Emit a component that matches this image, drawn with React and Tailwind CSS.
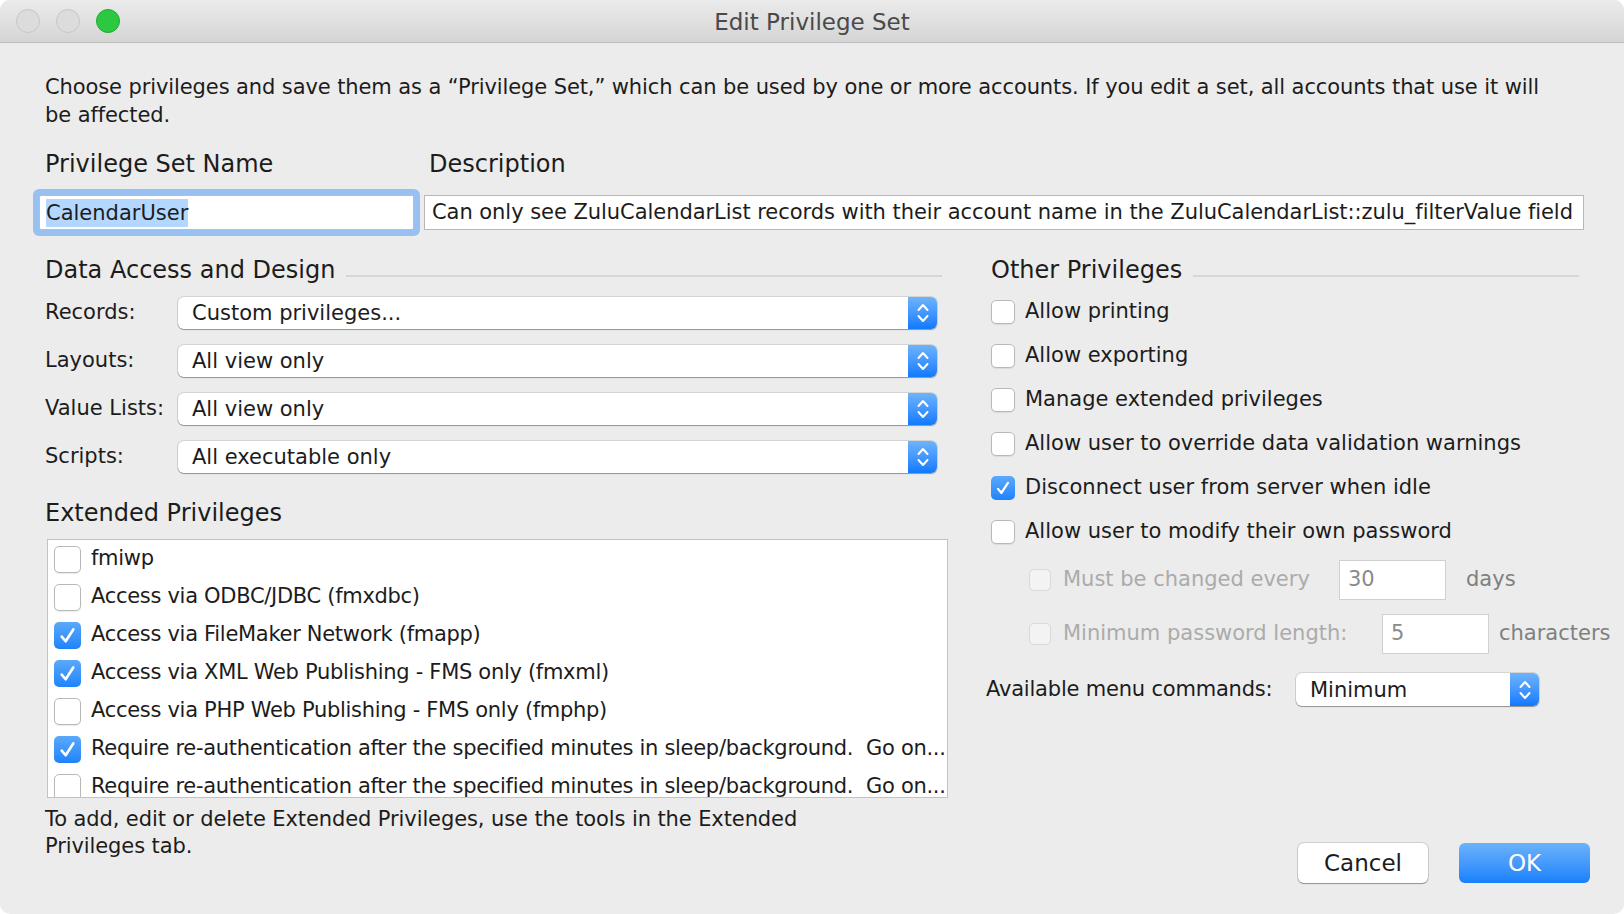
import React from 'react'

const FONT = { fontFamily: "'DejaVu Sans', 'Liberation Sans', sans-serif" }

const EXTENDED = [
  { label: 'fmiwp', on: false },
  { label: 'Access via ODBC/JDBC (fmxdbc)', on: false },
  { label: 'Access via FileMaker Network (fmapp)', on: true },
  { label: 'Access via XML Web Publishing - FMS only (fmxml)', on: true },
  { label: 'Access via PHP Web Publishing - FMS only (fmphp)', on: false },
  { label: 'Require re-authentication after the specified minutes in sleep/background.  Go on...', on: true },
  { label: 'Require re-authentication after the specified minutes in sleep/background.  Go on...', on: false },
]

const OTHER = [
  { label: 'Allow printing', on: false },
  { label: 'Allow exporting', on: false },
  { label: 'Manage extended privileges', on: false },
  { label: 'Allow user to override data validation warnings', on: false },
  { label: 'Disconnect user from server when idle', on: true },
  { label: 'Allow user to modify their own password', on: false },
]

const POPUPS = [
  { label: 'Records:', value: 'Custom privileges...' },
  { label: 'Layouts:', value: 'All view only' },
  { label: 'Value Lists:', value: 'All view only' },
  { label: 'Scripts:', value: 'All executable only' },
]

function Check({ on, size = 24, disabled = false }) {
  if (on) {
    return (
      <div
        className="shrink-0 rounded-[5px] bg-gradient-to-b from-[#5aa9fb] to-[#1d83fb] flex items-center justify-center"
        style={{ width: size, height: size }}
      >
        <svg width={size - 6} height={size - 6} viewBox="0 0 16 16" fill="none">
          <path d="M3.6 8.8 L6.6 12.4 L12.4 3.4" stroke="white" strokeWidth="2" strokeLinecap="round" strokeLinejoin="round" />
        </svg>
      </div>
    )
  }
  return (
    <div
      className={
        disabled
          ? 'shrink-0 rounded-[5px] bg-[#f3f3f3] border border-[#d9d9d9]'
          : 'shrink-0 rounded-[5px] bg-white border border-[#b9b9b9] shadow-[0_1px_1px_rgba(0,0,0,0.08)]'
      }
      style={{ width: size, height: size }}
    />
  )
}

function Stepper() {
  return (
    <div className="w-[29px] h-full rounded-r-[6px] bg-gradient-to-b from-[#6cb3fb] to-[#0b79fe] flex items-center justify-center">
      <svg width="14" height="24" viewBox="0 0 14 24" fill="none">
        <path d="M2.5 9 L7 4 L11.5 9" stroke="white" strokeWidth="2" strokeLinecap="round" strokeLinejoin="round" />
        <path d="M2.5 15 L7 20 L11.5 15" stroke="white" strokeWidth="2" strokeLinecap="round" strokeLinejoin="round" />
      </svg>
    </div>
  )
}

function Popup({ value, className }) {
  return (
    <div
      className={`shrink-0 flex items-center bg-white rounded-[6px] shadow-[0_0_0_1px_rgba(0,0,0,0.1),0_1px_1px_rgba(0,0,0,0.3)] ${className}`}
    >
      <div className="flex-1 pl-[14px] text-[21px] leading-[28px] whitespace-nowrap">{value}</div>
      <Stepper />
    </div>
  )
}

function SectionHead({ title, endGap }) {
  return (
    <div className="flex items-start">
      <div className="text-[24px] leading-[28px] whitespace-nowrap">{title}</div>
      <div className={`flex-1 h-[2px] bg-[#d6d6d6] mt-[19px] ml-[11px] ${endGap}`} />
    </div>
  )
}

export default function App() {
  return (
    <div className="w-[1624px] h-[914px] bg-white text-[#1c1c1c]" style={FONT}>
      <div className="w-full h-full rounded-[10px] bg-[#ececec] overflow-hidden flex flex-col">
        {/* title bar */}
        <div className="h-[43px] shrink-0 grid grid-cols-[1fr_auto_1fr] items-center bg-gradient-to-b from-[#ebebeb] to-[#d5d5d5] border-b border-[#bdbdbd]">
          <div className="flex items-center gap-[16px] pl-[16px]">
            <div className="w-[24px] h-[24px] rounded-full bg-[#dcdcdc] border border-[#c6c6c6]" />
            <div className="w-[24px] h-[24px] rounded-full bg-[#dcdcdc] border border-[#c6c6c6]" />
            <div className="w-[24px] h-[24px] rounded-full bg-[#2bc840] border border-[#23a934]" />
          </div>
          <div className="pt-[3px] text-[23px] text-[#4a4a4a]">Edit Privilege Set</div>
          <div />
        </div>

        <div className="flex-1 pl-[45px] pr-[40px]">
          <p className="mt-[30px] text-[21px] leading-[28px] tracking-[-0.1px] whitespace-nowrap">
            Choose privileges and save them as a “Privilege Set,” which can be used by one or more accounts. If you edit a set, all accounts that use it will
            <br />
            be affected.
          </p>

          {/* name + description */}
          <div className="mt-[21px] -ml-[6px] flex">
            <div className="w-[375px] shrink-0">
              <div className="pl-[6px] text-[24px] leading-[28px]">Privilege Set Name</div>
              <div className="mt-[17px] h-[35px] bg-white border border-[#a7c1e4] rounded-[2px] shadow-[0_0_0_6px_#98c0f1] flex items-center pl-[6px]">
                <span className="bg-[#b4d7ff] text-[21px] leading-[28px]">CalendarUser</span>
              </div>
            </div>
            <div className="ml-[10px] flex-1 min-w-0">
              <div className="pl-[5px] text-[24px] leading-[28px]">Description</div>
              <div className="mt-[17px] h-[35px] bg-white border border-[#b8b8b8] flex items-center px-[7px] overflow-hidden whitespace-nowrap text-[21px] tracking-[-0.05px]">
                Can only see ZuluCalendarList records with their account name in the ZuluCalendarList::zulu_filterValue field
              </div>
            </div>
          </div>

          <div className="mt-[26px] flex">
            {/* left column */}
            <div className="w-[903px] shrink-0">
              <SectionHead title="Data Access and Design" endGap="mr-[6px]" />
              <div className="mt-[13px] flex flex-col gap-[16px]">
                {POPUPS.map((p) => (
                  <div key={p.label} className="h-[32px] flex items-center">
                    <div className="w-[133px] shrink-0 text-[21px] whitespace-nowrap">{p.label}</div>
                    <Popup value={p.value} className="w-[759px] h-[32px]" />
                  </div>
                ))}
              </div>

              <div className="mt-[26px] text-[24px] leading-[28px]">Extended Privileges</div>
              <div className="mt-[12px] ml-[2px] w-[901px] h-[259px] bg-white border border-[#c3c3c3] overflow-hidden">
                {EXTENDED.map((e, i) => (
                  <div key={i} className="h-[38px] flex items-center pl-[6px] gap-[10px]">
                    <Check on={e.on} size={27} />
                    <span className="text-[21px] tracking-[-0.3px] whitespace-pre">{e.label}</span>
                  </div>
                ))}
              </div>
              <p className="mt-[8px] text-[21px] leading-[27px] tracking-[-0.1px] whitespace-nowrap">
                To add, edit or delete Extended Privileges, use the tools in the Extended
                <br />
                Privileges tab.
              </p>
            </div>

            {/* right column */}
            <div className="ml-[38px] flex-1 min-w-0">
              <div className="pl-[5px]">
                <SectionHead title="Other Privileges" endGap="mr-[5px]" />
              </div>
              <div className="mt-[6px]">
                {OTHER.map((o) => (
                  <div key={o.label} className="h-[44px] flex items-center pl-[5px] gap-[10px]">
                    <Check on={o.on} size={24} />
                    <span className="text-[21px] whitespace-nowrap">{o.label}</span>
                  </div>
                ))}
              </div>

              <div className="mt-[6px] h-[40px] flex items-center pl-[43px]">
                <Check on={false} size={22} disabled />
                <span className="ml-[12px] w-[276px] shrink-0 text-[21px] text-[#ababab] whitespace-nowrap">Must be changed every</span>
                <div className="w-[107px] h-[40px] shrink-0 bg-white border border-[#d0d0d0] flex items-center pl-[8px] text-[21px] text-[#8a8a8a]">30</div>
                <span className="ml-[20px] shrink-0 text-[21px] text-[#808080]">days</span>
              </div>
              <div className="mt-[14px] h-[40px] flex items-center pl-[43px]">
                <Check on={false} size={22} disabled />
                <span className="ml-[12px] w-[319px] shrink-0 text-[21px] text-[#ababab] whitespace-nowrap">Minimum password length:</span>
                <div className="w-[107px] h-[40px] shrink-0 bg-white border border-[#d0d0d0] flex items-center pl-[8px] text-[21px] text-[#8a8a8a]">5</div>
                <span className="ml-[10px] shrink-0 text-[21px] text-[#808080] whitespace-nowrap">characters</span>
              </div>

              <div className="mt-[19px] h-[33px] flex items-center">
                <span className="w-[310px] shrink-0 text-[21px] tracking-[-0.2px] whitespace-nowrap">Available menu commands:</span>
                <Popup value="Minimum" className="w-[243px] h-[33px]" />
              </div>

              <div className="mt-[137px] -mr-[6px] flex justify-end gap-[31px]">
                <button className="w-[130px] h-[40px] rounded-[6px] bg-white shadow-[0_0_0_1px_rgba(0,0,0,0.12),0_1px_1px_rgba(0,0,0,0.3)] text-[23px] text-[#1c1c1c]">
                  Cancel
                </button>
                <button className="w-[131px] h-[40px] rounded-[6px] bg-gradient-to-b from-[#6ab2fb] to-[#1580fc] text-[23px] text-white">
                  OK
                </button>
              </div>
            </div>
          </div>
        </div>
      </div>
    </div>
  )
}
